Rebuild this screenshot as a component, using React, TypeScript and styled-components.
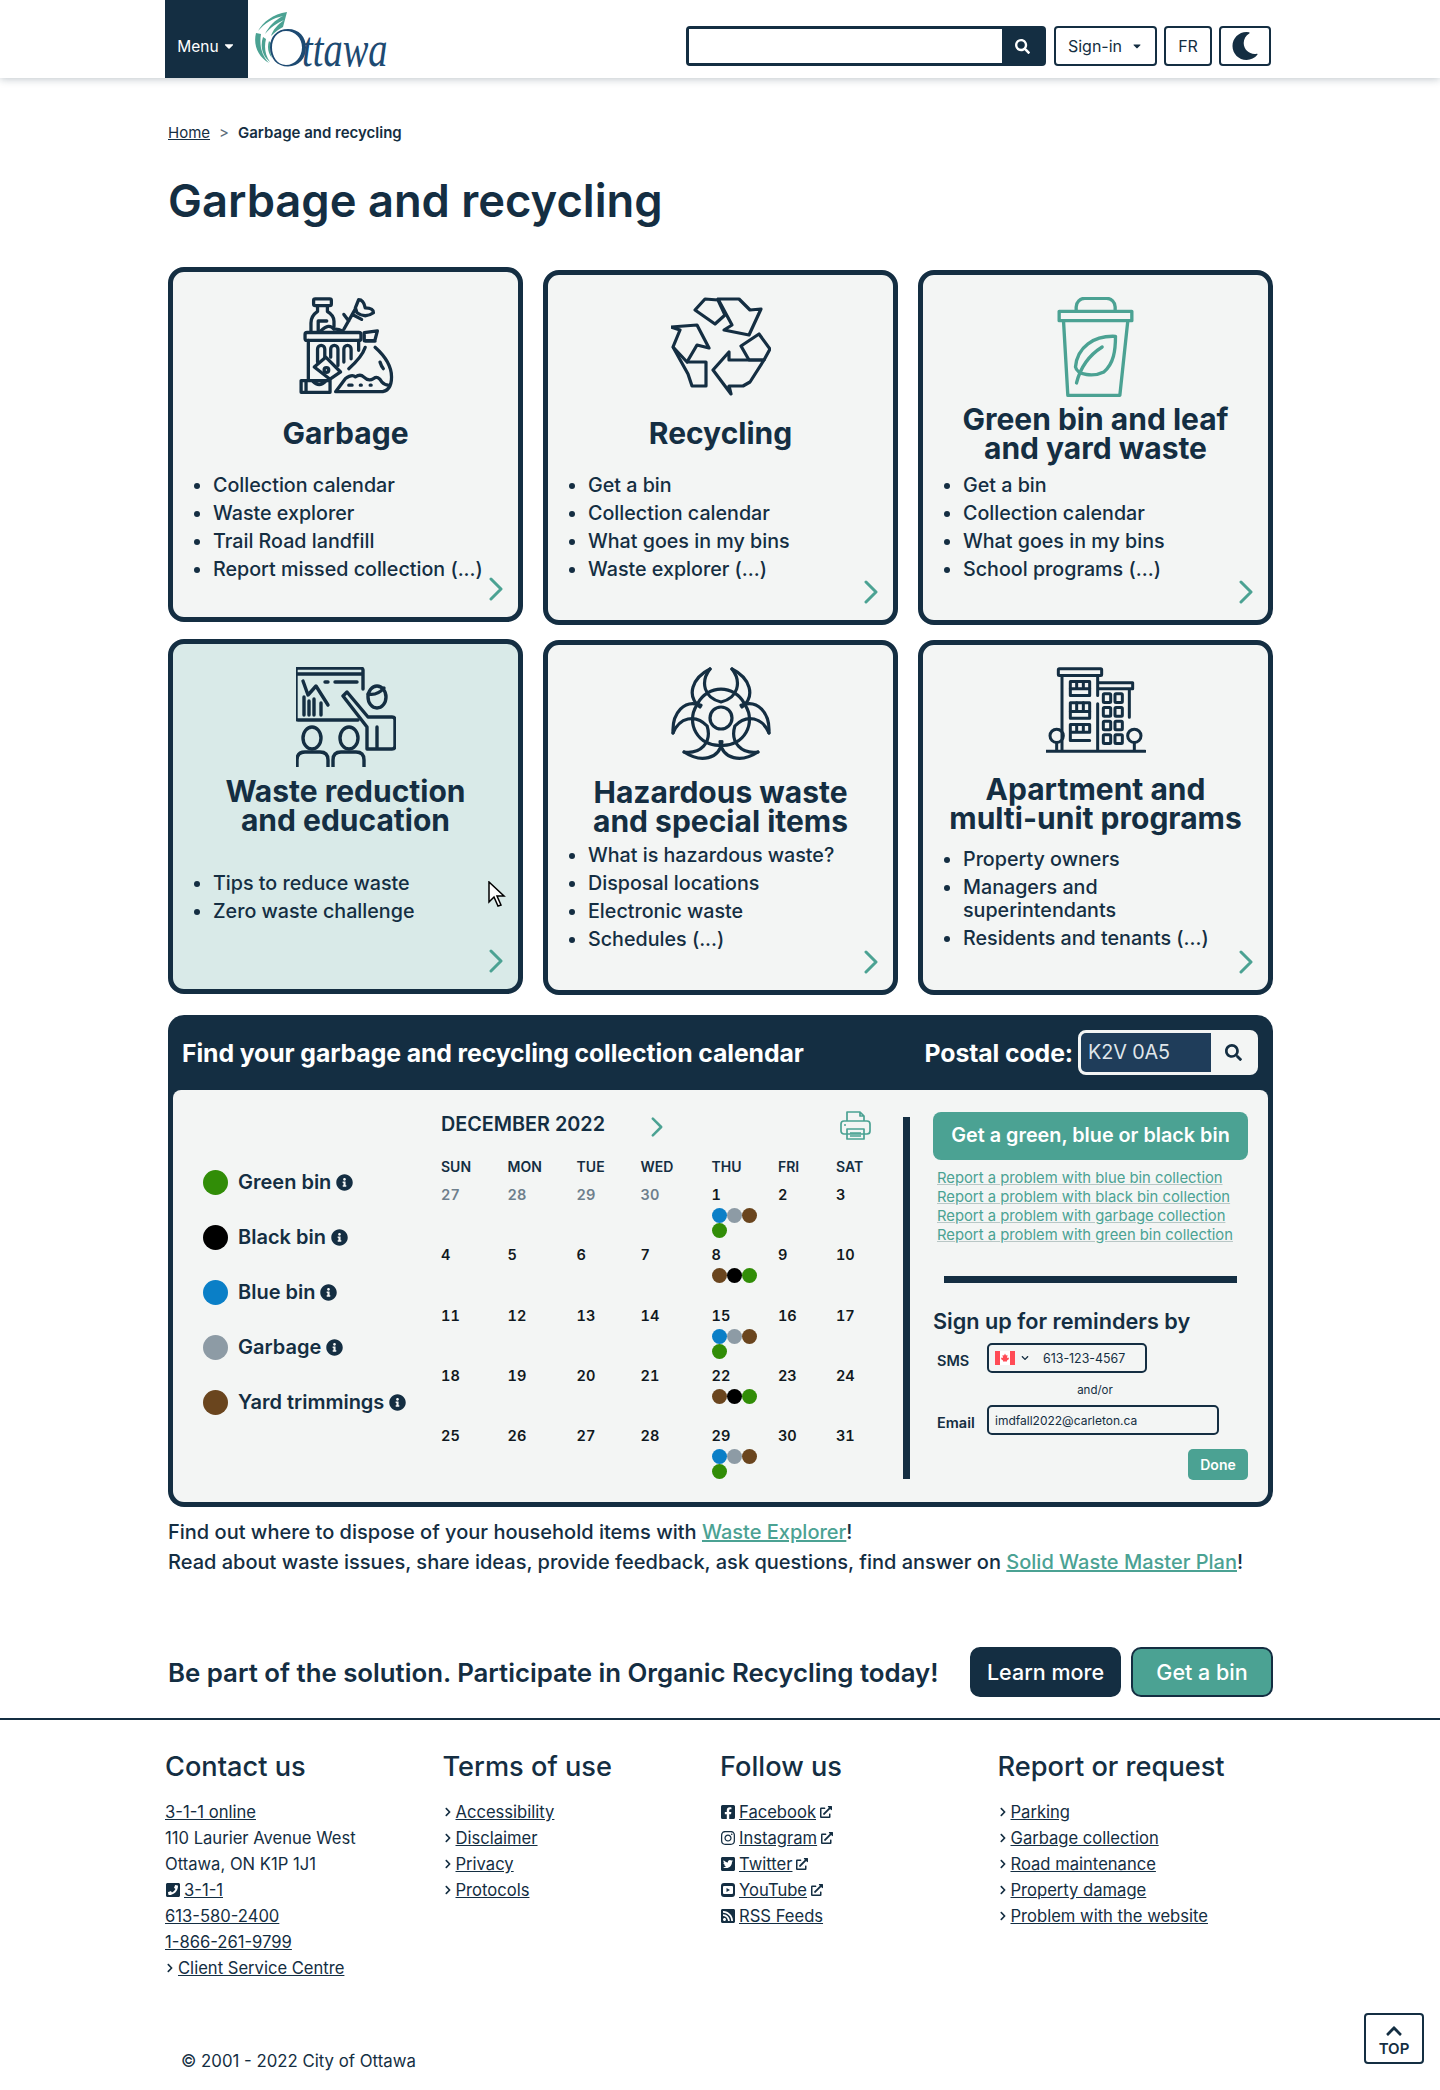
import React from "react"
import styled, { createGlobalStyle } from "styled-components"
import {
  FaSearch, FaCaretDown, FaInfoCircle, FaChevronUp, FaChevronRight, FaChevronDown, FaFacebookSquare, FaInstagram,
  FaTwitterSquare, FaRssSquare, FaPhoneSquare, FaExternalLinkAlt, FaMoon,
} from "react-icons/fa"

const dark = "#142e42"
const teal = "#4ba293"
const paper = "#f3f5f4"
const font = `"Inter", "Noto Sans", sans-serif`

const GlobalStyle = createGlobalStyle`
  * { box-sizing: border-box; }
  body { margin: 0; background: #fff; color: ${dark}; font-family: ${font}; }
  a { color: inherit; }
`

const Page = styled.div`
  position: relative;
  min-height: 2090px;
`

const HeaderBar = styled.header`
  height: 78px;
  box-shadow: 0 1px 8px rgba(20, 46, 66, 0.28);
`

const HeaderInner = styled.div`
  width: 1110px;
  height: 78px;
  margin: 0 auto;
  padding-right: 4px;
  display: flex;
  align-items: flex-start;
`

const MenuButton = styled.button`
  width: 83px;
  height: 78px;
  border: 0;
  padding: 14px 0 0;
  background: ${dark};
  color: #fff;
  font: 400 15.5px ${font};
  display: flex;
  align-items: center;
  justify-content: center;
  gap: 3px;
`

const LogoSvg = styled.svg`
  width: 135px;
  height: 78px;
  margin-left: 7px;
`

const HeaderTools = styled.div`
  margin: 26px 0 0 auto;
  display: flex;
  gap: 7px;
`

const SearchForm = styled.form`
  width: 360px;
  height: 40px;
  margin-right: 1px;
  border: 3px solid ${dark};
  border-radius: 4px;
  display: flex;
`

const SearchField = styled.input`
  flex: 1;
  min-width: 0;
  border: 0;
  background: #fff;
`

const SearchButton = styled.div`
  width: 41px;
  background: ${dark};
  color: #fff;
  font-size: 15px;
  display: flex;
  align-items: center;
  justify-content: center;
`

const ToolButton = styled.button<{ $w: number }>`
  width: ${(p) => p.$w}px;
  height: 40px;
  border: 2px solid ${dark};
  border-radius: 4px;
  background: #fff;
  color: ${dark};
  font: 400 16px ${font};
  display: flex;
  align-items: center;
  justify-content: center;
  gap: 9px;
  padding: 0;
`

const Main = styled.main`
  width: 1105px;
  margin-left: 168px;
`

const Crumbs = styled.nav`
  margin-top: 45px;
  height: 20px;
  line-height: 20px;
  font-size: 15px;
  display: flex;
`

const CrumbSep = styled.span`
  margin: 0 9px;
  color: #5b6d7b;
`

const CrumbNow = styled.span`
  font-weight: 600;
`

const PageTitle = styled.h1`
  margin: 29px 0 0;
  height: 58px;
  line-height: 58px;
  font-size: 45.3px;
  font-weight: 600;
`

const CardGrid = styled.section`
  margin-top: 40px;
  display: grid;
  grid-template-columns: repeat(3, 355px);
  grid-auto-rows: 355px;
  column-gap: 20px;
  row-gap: 15px;
`

const Card = styled.a<{ $lift?: number; $active?: boolean }>`
  position: relative;
  display: block;
  border: 5px solid ${dark};
  border-radius: 16px;
  background: ${(p) => (p.$active ? "#d9eae8" : paper)};
  padding-top: ${(p) => 22 + (p.$lift || 0)}px;
  transform: translateY(${(p) => -(p.$lift || 0)}px);
`

const IconBox = styled.div`
  height: 100px;
  display: flex;
  justify-content: center;
  align-items: flex-start;
`

const CardTitle = styled.h2<{ $nudge?: number }>`
  height: 74px;
  margin: ${(p) => p.$nudge || 0}px 0 -${(p) => p.$nudge || 0}px;
  font-size: 30px;
  line-height: 29.5px;
  font-weight: 700;
  text-align: center;
  display: flex;
  align-items: center;
  justify-content: center;
`

const CardList = styled.ul<{ $top?: number }>`
  margin: ${(p) => (p.$top === undefined ? 2.5 : p.$top)}px 0 0;
  padding: 0 0 0 40px;
`

const CardItem = styled.li`
  font-size: 19.7px;
  font-weight: 500;
  line-height: 23px;
  margin-bottom: 5px;
`

const CardArrow = styled.svg`
  position: absolute;
  right: 15px;
  bottom: 16px;
  width: 14px;
  height: 24px;
`

const Panel = styled.section`
  margin-top: 20px;
  height: 492px;
  border-radius: 16px;
  background: ${dark};
  padding: 0 5px 5px;
  display: flex;
  flex-direction: column;
`

const PanelHead = styled.div`
  height: 75px;
  padding: 0 10px 0 9px;
  color: #fff;
  display: flex;
  align-items: center;
  font-size: 24.8px;
  font-weight: 700;
  letter-spacing: -0.1px;
`

const PostalLabel = styled.span`
  margin-left: auto;
  margin-right: 5px;
`

const PostalBox = styled.div`
  width: 180px;
  height: 45px;
  border: 3px solid ${paper};
  border-radius: 8px;
  background: ${paper};
  display: flex;
  overflow: hidden;
`

const PostalField = styled.div`
  width: 130px;
  background: #1f3d5a;
  color: #dfe6ea;
  font-size: 19.8px;
  font-weight: 400;
  line-height: 39px;
  padding-left: 7px;
`

const PostalSearch = styled.div`
  flex: 1;
  color: ${dark};
  font-size: 17px;
  display: flex;
  align-items: center;
  justify-content: center;
`

const PanelBody = styled.div`
  flex: 1;
  background: ${paper};
  border-radius: 8px 8px 11px 11px;
  display: flex;
`

const Legend = styled.div`
  width: 268px;
  padding: 64.5px 0 0 30px;
`

const LegendRow = styled.div`
  height: 55px;
  display: flex;
  align-items: center;
  font-size: 20px;
  font-weight: 600;
`

const Swatch = styled.span<{ $c: string; $size: number }>`
  width: ${(p) => p.$size}px;
  height: ${(p) => p.$size}px;
  flex: none;
  border-radius: 50%;
  background: ${(p) => p.$c};
`

const LegendLabel = styled.span`
  margin: 0 5px 0 10px;
`

const InfoIcon = styled(FaInfoCircle)`
  font-size: 17px;
`

const Calendar = styled.div`
  width: 462px;
  padding-top: 20px;
`

const MonthRow = styled.div`
  width: 430px;
  height: 32px;
  display: flex;
  align-items: flex-start;
`

const MonthName = styled.div`
  width: 210px;
  line-height: 28px;
  font-size: 19.8px;
  font-weight: 600;
  white-space: nowrap;
`

const MonthArrow = styled.svg`
  width: 12px;
  height: 20px;
  margin-top: 7px;
`

const PrinterIcon = styled.svg`
  width: 31px;
  height: 31px;
  margin-left: auto;
`

const DayGrid = styled.div`
  margin-top: 15px;
  display: grid;
  grid-template-columns: 66.6px 69px 64px 71px 66.4px 58px 40px;
  grid-template-rows: 28px repeat(5, 60.25px);
`

const DayHead = styled.div`
  font-size: 14px;
  font-weight: 600;
  line-height: 20px;
`

const DayCell = styled.div<{ $muted?: boolean }>`
  font-size: 14.5px;
  font-weight: 600;
  line-height: 20px;
  font-variant-numeric: tabular-nums;
  color: ${(p) => (p.$muted ? "#6e7f8c" : "#101820")};
`

const DotWrap = styled.div`
  width: 45px;
  margin-top: 3px;
  display: flex;
  flex-wrap: wrap;
  line-height: 0;
`

const PanelRule = styled.div`
  width: 7px;
  height: 362px;
  margin-top: 27px;
  background: ${dark};
`

const SidePane = styled.div`
  width: 315px;
  margin: 22px 0 0 23px;
`

const BinButton = styled.a`
  display: block;
  height: 48px;
  border-radius: 8px;
  background: ${teal};
  color: #fff;
  font-size: 19.8px;
  font-weight: 600;
  line-height: 46px;
  text-align: center;
`

const ReportLinks = styled.div`
  margin: 8.5px 0 0 4px;
`

const ReportLink = styled.a`
  display: block;
  width: fit-content;
  font-size: 14.8px;
  line-height: 19px;
  color: ${teal};
  text-decoration: underline;
  text-decoration-color: #b9c7c6;
`

const SideRule = styled.div`
  width: 293px;
  height: 7px;
  margin: 31.5px 0 0 11px;
  background: ${dark};
`

const SignHead = styled.h3`
  margin: 23px 0 0;
  font-size: 21.7px;
  font-weight: 600;
  line-height: 30px;
`

const FormRow = styled.div<{ $top?: number }>`
  display: flex;
  align-items: center;
  padding-left: 4px;
  margin-top: ${(p) => p.$top || 0}px;
`

const FormLabel = styled.label`
  width: 50px;
  font-size: 14.5px;
  font-weight: 600;
  padding-top: 5px;
`

const FieldBox = styled.div<{ $w: number }>`
  width: ${(p) => p.$w}px;
  height: 30px;
  border: 2px solid ${dark};
  border-radius: 5px;
  background: ${paper};
  font-size: 12px;
  display: flex;
  align-items: center;
  padding-left: 6px;
`

const PhoneText = styled.span`
  margin-left: 14px;
  font-size: 12.4px;
`

const FlagCaret = styled(FaChevronDown)`
  font-size: 8px;
  margin-left: 6px;
`

const AndOr = styled.div`
  margin: 10px 0 8px;
  height: 14px;
  line-height: 14px;
  font-size: 11.5px;
  text-align: center;
  padding-left: 9px;
`

const DoneRow = styled.div`
  margin-top: 14px;
  display: flex;
  justify-content: flex-end;
`

const DoneButton = styled.button`
  width: 60px;
  height: 31px;
  border: 0;
  border-radius: 5px;
  background: ${teal};
  color: #fff;
  font: 600 14px ${font};
`

const Notes = styled.div`
  margin-top: 10px;
  font-size: 20px;
  font-weight: 500;
  line-height: 30px;
  white-space: nowrap;
`

const NoteLink = styled.a`
  color: ${teal};
  text-decoration: underline;
`

const PromoRow = styled.div`
  margin-top: 70px;
  display: flex;
  align-items: center;
`

const PromoText = styled.div`
  font-size: 25.8px;
  font-weight: 600;
  white-space: nowrap;
`

const PromoButton = styled.a<{ $alt?: boolean; $w: number }>`
  width: ${(p) => p.$w}px;
  height: 50px;
  border: 2px solid ${dark};
  border-radius: 10px;
  background: ${(p) => (p.$alt ? teal : dark)};
  color: #fff;
  font-size: 21.5px;
  font-weight: 500;
  text-align: center;
  line-height: 46px;
`

const PromoButtons = styled.div`
  margin-left: auto;
  display: flex;
  gap: 10px;
`

const Footer = styled.footer`
  margin-top: 21px;
  border-top: 2px solid ${dark};
  padding-bottom: 17px;
`

const FooterInner = styled.div`
  width: 1110px;
  margin: 0 auto;
`

const FooterCols = styled.div`
  padding-top: 30px;
  height: 261px;
  display: grid;
  grid-template-columns: repeat(4, 277.5px);
`

const FooterHead = styled.h4`
  margin: 0 0 15px;
  font-size: 27.2px;
  font-weight: 500;
  line-height: 34px;
`

const FooterLine = styled.div`
  height: 26px;
  line-height: 26px;
  font-size: 16.6px;
  display: flex;
  align-items: center;
  gap: 3px;
`

const FooterIcon = styled.span`
  font-size: 16px;
  display: inline-flex;
`

const FooterCaret = styled(FaChevronRight)`
  font-size: 10px;
`

const OutIcon = styled(FaExternalLinkAlt)`
  font-size: 12px;
  margin-left: 1px;
`

const Copyright = styled.div`
  margin-top: 68px;
  padding-left: 16px;
  font-size: 16.8px;
  line-height: 24px;
`

const TopButton = styled.a`
  position: absolute;
  right: 16px;
  bottom: 26px;
  width: 60px;
  height: 51px;
  border: 2.5px solid ${dark};
  border-radius: 4px;
  background: #fff;
  font-size: 15px;
  font-weight: 600;
  line-height: 18px;
  padding-top: 3px;
  display: flex;
  flex-direction: column;
  align-items: center;
  justify-content: center;
`

const CursorMark = styled.svg`
  position: absolute;
  left: 315px;
  top: 237px;
  width: 18px;
  height: 26px;
`

const GarbageIcon = () => (
  <svg width="97" height="98" viewBox="48 52 294 298" fill="none" stroke={dark} strokeWidth="10" strokeLinejoin="round" strokeLinecap="round">
    <rect x="98" y="58" width="54" height="20" rx="5" />
    <path d="M110 78v18q-20 14-20 35v27M140 78v18q20 12 20 30v16M112 155v-30h26" />
    <path d="M120 155q25-25 40-5 12-2 25 5M190 150l35-62M205 125l-15-20M216 105l28 15M225 85l10-25q15 0 20 25 25 0 25 15-25 18-50 0z" />
    <rect x="72" y="160" width="170" height="24" rx="6" />
    <path d="M82 184v120M235 184v30M110 250v-40a11 11 0 0 1 22 0v30M150 235v-25a11 11 0 0 1 22 0v50M190 250v-40a11 11 0 0 1 22 0v30" />
    <path d="M100 265l35-30 45 45-32 22z" fill={paper} />
    <path d="M60 306h88v36H60zM75 306v36M95 308q20 20 40 0" fill={paper} />
    <circle cx="137" cy="274" r="7" />
    <path d="M252 160l40-5-8 30h-32zM255 186h30M255 205q-10 30-50 65M285 205q50 45 50 90 0 45-35 45H165l30-40q20-15 30-5 15-10 25 0 15 15 30 5 15-10 25 10 10 10 20 10" />
    <path d="M205 320h10M240 320h3M270 320h3M300 250q5 15 10 20" />
  </svg>
)

const RecycleIcon = () => (
  <svg width="100" height="100" viewBox="0 0 100 100" fill="none" stroke={dark} strokeWidth="3.2" strokeLinejoin="round">
    <path d="M24 13L34 2L47 3L54 18L44 27Z" />
    <path d="M47 2H68L79 13L90 12L78 38L53 33L61 28Z" />
    <path d="M0 30L26 28L38 51L26 48L16 65L2 50L9 33Z" />
    <path d="M2 50L17 77L21 89H35V65H16" />
    <path d="M42 73L58 55V63H93L79 85L72 89H58L60 97Z" />
    <path d="M70 49L88 37L99 52L93 63H78Z" />
  </svg>
)

const BinIcon = () => (
  <svg width="77" height="100" viewBox="530 110 230 300" fill="none" stroke={teal} strokeWidth="10" strokeLinejoin="round" strokeLinecap="round">
    <path d="M587 150v-10a26 26 0 0 1 26-26h65a26 26 0 0 1 26 26v10" />
    <rect x="536" y="153" width="218" height="28" />
    <path d="M549 181l13 224h156l24-224" />
    <path d="M705 228c-65-3-115 32-120 92 5 25 55 30 85 15 30-25 35-65 35-107z" />
    <path d="M588 368c12-48 37-83 77-108" />
  </svg>
)

const TeachIcon = () => (
  <svg width="100" height="100" viewBox="0 0 100 100" fill="none" stroke={dark} strokeWidth="3.4" strokeLinejoin="round" strokeLinecap="round">
    <path d="M67 22V3a2 2 0 0 0-2-2H2a2 2 0 0 0-2 2v48a2 2 0 0 0 2 2h60M0 7h67M29 15h3M39 15h22" />
    <path d="M7 14l5 14 8-9 12 19M8 30v18M13 34v14M18 32v16M25 36v12" />
    <ellipse cx="81" cy="30" rx="9" ry="11" />
    <path d="M72 27q9 2 16-6" />
    <path d="M47 29l4-4 21 25h24q3 0 3 3v26q0 3-3 3H71V60zM81 60v20M71 80V60" />
    <ellipse cx="16" cy="71" rx="9" ry="11" />
    <ellipse cx="53" cy="71" rx="9" ry="11" />
    <path d="M1 100V93q0-8 8-8h15q8 0 8 8v7M37 100V93q0-8 8-8h15q8 0 8 8v7" />
  </svg>
)

const BuildingIcon = () => (
  <svg width="100" height="87" viewBox="500 110 300 260" fill="none" stroke={dark} strokeWidth="9" strokeLinejoin="round" strokeLinecap="round">
    <rect x="537" y="115" width="130" height="20" rx="3" />
    <path d="M548 135v225M655 135v60M655 220v140M660 157h100v18h-100M750 175v85M500 362h297" />
    <rect x="573" y="153" width="58" height="42" />
    <path d="M573 175h58M592 153v22M612 153v22" />
    <rect x="573" y="217" width="58" height="46" />
    <path d="M573 243h58M592 217v26M612 217v26" />
    <path d="M631 305v-23h-58v48h58M573 305h58M592 282v23M612 282v23" />
    {[190, 231, 272, 313].map((y) => (
      <g key={y}>
        <rect x="672" y={y} width="22" height="26" rx="3" />
        <rect x="707" y={y} width="22" height="26" rx="3" />
      </g>
    ))}
    <circle cx="532" cy="316" r="20" />
    <circle cx="765" cy="316" r="20" />
    <path d="M532 336v24M765 336v24" />
  </svg>
)

const BiohazardIcon = () => {
  const lobe = (
    <>
      <path d="M39 2C21 11 15 29 29 40" />
      <path d="M61 2C79 11 85 29 71 40" />
      <path d="M39 2C29 15 33 31 50 35C67 31 71 15 61 2" />
      <path d="M27 36A26 26 0 0 1 73 36" />
    </>
  )
  return (
    <svg width="100" height="100" viewBox="0 0 100 100" fill="none" stroke={dark} strokeWidth="3.2" strokeLinecap="round" strokeLinejoin="round">
      <circle cx="50" cy="51" r="11" />
      {lobe}
      <g transform="rotate(120 50 51)">{lobe}</g>
      <g transform="rotate(240 50 51)">{lobe}</g>
    </svg>
  )
}

const Chevron = ({ as: Comp }: { as: typeof CardArrow }) => (
  <Comp viewBox="0 0 14 24" fill="none" stroke={teal} strokeWidth="3" strokeLinecap="round" strokeLinejoin="round">
    <path d="M2 2l10 10L2 22" />
  </Comp>
)

const OttawaLogo = () => (
  <LogoSvg viewBox="255 0 135 78">
    <path d="M287 12c-14 2-24 10-29 19 7-8 15-13 25-15-8 4-14 10-18 18 6-7 12-11 19-14-7 5-11 10-13 16 4-4 8-7 12-9z" fill={teal} />
    <path d="M256 33c-3 12 2 24 13 30-7-7-10-17-8-29zM263 37c-3 9-1 19 7 25-5-7-6-15-4-23zM269 41c-2 6-1 12 3 17-2-5-2-11-1-15z" fill={teal} />
    <path fillRule="evenodd" d="M288 29c11 0 18 8 18 18.500s-7 19-18 19-18-8-18-19 7-18.500 18-18.500zM286 31c-9 0-14 8-14 16.500s5 17.500 14 17.500 16-8 16-17.500-7-16.500-16-16.500z" fill="#1d4a72" />
    <text transform="translate(302 66) scale(0.77 1)" fontFamily="'Liberation Serif', serif" fontStyle="italic" fontSize="50" fill="#1d4a72">ttawa</text>
  </LogoSvg>
)

const PrinterSvg = () => (
  <PrinterIcon viewBox="0 0 31 31" fill="none" stroke={teal} strokeWidth="1.7" strokeLinejoin="round">
    <path d="M7 11V2h13l4 4v5M20 2v4h4" />
    <rect x="1" y="11" width="29" height="13" rx="3" />
    <path d="M7 19h17v10H7z" />
    <path d="M10 23h11M10 26h11M4 15h2" />
  </PrinterIcon>
)

const Flag = () => (
  <svg width="20" height="14" viewBox="0 0 20 14">
    <rect width="20" height="14" fill="#fff" />
    <rect width="5" height="14" fill="#ff4b55" />
    <rect x="15" width="5" height="14" fill="#ff4b55" />
    <path d="M10 2.500l1 2 1.500-.5-.5 3 1.500-.5.500 1.500-2 1.500v1h-4v-1l-2-1.500.5-1.500 1.500.5-.5-3 1.500.5z" fill="#ff4b55" />
  </svg>
)

const YoutubeBox = () => (
  <svg width="16" height="16" viewBox="0 0 16 16">
    <rect x="1" y="1" width="14" height="14" rx="3" fill={dark} />
    <rect x="3" y="4" width="10" height="8" rx="1" fill="#fff" />
    <path d="M6.500 6l3.500 2-3.500 2z" fill={dark} />
  </svg>
)

const cards = [
  { title: <>Garbage</>, icon: <GarbageIcon />, items: ["Collection calendar", "Waste explorer", "Trail Road landfill", "Report missed collection (...)"], lift: 3 },
  { title: <>Recycling</>, icon: <RecycleIcon />, items: ["Get a bin", "Collection calendar", "What goes in my bins", "Waste explorer (...)"] },
  { title: <>Green bin and leaf<br />and yard waste</>, icon: <BinIcon />, items: ["Get a bin", "Collection calendar", "What goes in my bins", "School programs (...)"] },
  { title: <>Waste reduction<br />and education</>, icon: <TeachIcon />, items: ["Tips to reduce waste", "Zero waste challenge"], lift: 1, active: true, nudge: 2, top: 31 },
  { title: <>Hazardous waste<br />and special items</>, icon: <BiohazardIcon />, items: ["What is hazardous waste?", "Disposal locations", "Electronic waste", "Schedules (...)"], nudge: 3 },
  { title: <>Apartment and<br />multi-unit programs</>, icon: <BuildingIcon />, items: ["Property owners", <>Managers and<br />superintendants</>, "Residents and tenants (...)"], top: 7 },
]

const bins = [
  { name: "Green bin", color: "#318d07" },
  { name: "Black bin", color: "#000" },
  { name: "Blue bin", color: "#0a7fc7" },
  { name: "Garbage", color: "#8d9ba5" },
  { name: "Yard trimmings", color: "#6a451e" },
]

const dayNames = ["SUN", "MON", "TUE", "WED", "THU", "FRI", "SAT"]
const days = [27, 28, 29, 30, 1, 2, 3, 4, 5, 6, 7, 8, 9, 10, 11, 12, 13, 14, 15, 16, 17, 18, 19, 20, 21, 22, 23, 24, 25, 26, 27, 28, 29, 30, 31]
const wide = ["#0a7fc7", "#8d9ba5", "#6a451e", "#318d07"]
const narrow = ["#6a451e", "#000", "#318d07"]
const pickups: Record<number, string[]> = { 4: wide, 11: narrow, 18: wide, 25: narrow, 32: wide }

const footerTerms = ["Accessibility", "Disclaimer", "Privacy", "Protocols"]
const footerRequests = ["Parking", "Garbage collection", "Road maintenance", "Property damage", "Problem with the website"]
const footerSocial = [
  { name: "Facebook", icon: <FaFacebookSquare /> },
  { name: "Instagram", icon: <FaInstagram /> },
  { name: "Twitter", icon: <FaTwitterSquare /> },
  { name: "YouTube", icon: <YoutubeBox /> },
]

export default function App() {
  return (
    <Page>
      <GlobalStyle />
      <HeaderBar>
        <HeaderInner>
          <MenuButton>Menu <FaCaretDown size={14} /></MenuButton>
          <OttawaLogo />
          <HeaderTools>
            <SearchForm>
              <SearchField />
              <SearchButton><FaSearch /></SearchButton>
            </SearchForm>
            <ToolButton $w={103}>Sign-in <FaCaretDown size={12} /></ToolButton>
            <ToolButton $w={48}>FR</ToolButton>
            <ToolButton $w={52}><FaMoon size={28} /></ToolButton>
          </HeaderTools>
        </HeaderInner>
      </HeaderBar>

      <Main>
        <Crumbs>
          <a href="#home">Home</a>
          <CrumbSep>&gt;</CrumbSep>
          <CrumbNow>Garbage and recycling</CrumbNow>
        </Crumbs>
        <PageTitle>Garbage and recycling</PageTitle>

        <CardGrid>
          {cards.map((c, i) => (
            <Card key={i} $lift={c.lift} $active={c.active}>
              <IconBox>{c.icon}</IconBox>
              <CardTitle $nudge={c.nudge}>
                <span>{c.title}</span>
              </CardTitle>
              <CardList $top={c.top}>
                {c.items.map((t, j) => <CardItem key={j}>{t}</CardItem>)}
              </CardList>
              <Chevron as={CardArrow} />
              {c.active && (
                <CursorMark viewBox="0 0 18 26">
                  <path d="M1 1v20l5-5 4 9 3-1-4-9h7z" fill="#fff" stroke="#000" strokeWidth="1.500" />
                </CursorMark>
              )}
            </Card>
          ))}
        </CardGrid>

        <Panel>
          <PanelHead>
            Find your garbage and recycling collection calendar
            <PostalLabel>Postal code:</PostalLabel>
            <PostalBox>
              <PostalField>K2V 0A5</PostalField>
              <PostalSearch><FaSearch /></PostalSearch>
            </PostalBox>
          </PanelHead>
          <PanelBody>
            <Legend>
              {bins.map((b) => (
                <LegendRow key={b.name}>
                  <Swatch $c={b.color} $size={25} />
                  <LegendLabel>{b.name}</LegendLabel>
                  <InfoIcon />
                </LegendRow>
              ))}
            </Legend>
            <Calendar>
              <MonthRow>
                <MonthName>DECEMBER 2022</MonthName>
                <Chevron as={MonthArrow} />
                <PrinterSvg />
              </MonthRow>
              <DayGrid>
                {dayNames.map((d) => <DayHead key={d}>{d}</DayHead>)}
                {days.map((d, i) => (
                  <DayCell key={i} $muted={i < 4}>
                    {d}
                    {pickups[i] && (
                      <DotWrap>
                        {pickups[i].map((c, j) => <Swatch key={j} $c={c} $size={15} />)}
                      </DotWrap>
                    )}
                  </DayCell>
                ))}
              </DayGrid>
            </Calendar>
            <PanelRule />
            <SidePane>
              <BinButton>Get a green, blue or black bin</BinButton>
              <ReportLinks>
                <ReportLink>Report a problem with blue bin collection</ReportLink>
                <ReportLink>Report a problem with black bin collection</ReportLink>
                <ReportLink>Report a problem with garbage collection</ReportLink>
                <ReportLink>Report a problem with green bin collection</ReportLink>
              </ReportLinks>
              <SideRule />
              <SignHead>Sign up for reminders by</SignHead>
              <FormRow $top={7}>
                <FormLabel>SMS</FormLabel>
                <FieldBox $w={160}>
                  <Flag />
                  <FlagCaret />
                  <PhoneText>613-123-4567</PhoneText>
                </FieldBox>
              </FormRow>
              <AndOr>and/or</AndOr>
              <FormRow>
                <FormLabel>Email</FormLabel>
                <FieldBox $w={232}>imdfall2022@carleton.ca</FieldBox>
              </FormRow>
              <DoneRow><DoneButton>Done</DoneButton></DoneRow>
            </SidePane>
          </PanelBody>
        </Panel>

        <Notes>
          <div>Find out where to dispose of your household items with <NoteLink>Waste Explorer</NoteLink>!</div>
          <div>Read about waste issues, share ideas, provide feedback, ask questions, find answer on <NoteLink>Solid Waste Master Plan</NoteLink>!</div>
        </Notes>

        <PromoRow>
          <PromoText>Be part of the solution. Participate in Organic Recycling today!</PromoText>
          <PromoButtons>
            <PromoButton $w={151}>Learn more</PromoButton>
            <PromoButton $w={142} $alt>Get a bin</PromoButton>
          </PromoButtons>
        </PromoRow>
      </Main>

      <Footer>
        <FooterInner>
          <FooterCols>
            <div>
              <FooterHead>Contact us</FooterHead>
              <FooterLine><a href="#o">3-1-1 online</a></FooterLine>
              <FooterLine>110 Laurier Avenue West</FooterLine>
              <FooterLine>Ottawa, ON K1P 1J1</FooterLine>
              <FooterLine><FooterIcon><FaPhoneSquare /></FooterIcon><a href="#p">3-1-1</a></FooterLine>
              <FooterLine><a href="#p">613-580-2400</a></FooterLine>
              <FooterLine><a href="#p">1-866-261-9799</a></FooterLine>
              <FooterLine><FooterCaret /><a href="#c">Client Service Centre</a></FooterLine>
            </div>
            <div>
              <FooterHead>Terms of use</FooterHead>
              {footerTerms.map((t) => (
                <FooterLine key={t}><FooterCaret /><a href="#t">{t}</a></FooterLine>
              ))}
            </div>
            <div>
              <FooterHead>Follow us</FooterHead>
              {footerSocial.map((s) => (
                <FooterLine key={s.name}>
                  <FooterIcon>{s.icon}</FooterIcon>
                  <a href="#s">{s.name}</a>
                  <OutIcon />
                </FooterLine>
              ))}
              <FooterLine><FooterIcon><FaRssSquare /></FooterIcon><a href="#r">RSS Feeds</a></FooterLine>
            </div>
            <div>
              <FooterHead>Report or request</FooterHead>
              {footerRequests.map((t) => (
                <FooterLine key={t}><FooterCaret /><a href="#q">{t}</a></FooterLine>
              ))}
            </div>
          </FooterCols>
          <Copyright>© 2001 - 2022 City of Ottawa</Copyright>
        </FooterInner>
      </Footer>

      <TopButton>
        <FaChevronUp size={18} />
        TOP
      </TopButton>
    </Page>
  )
}
